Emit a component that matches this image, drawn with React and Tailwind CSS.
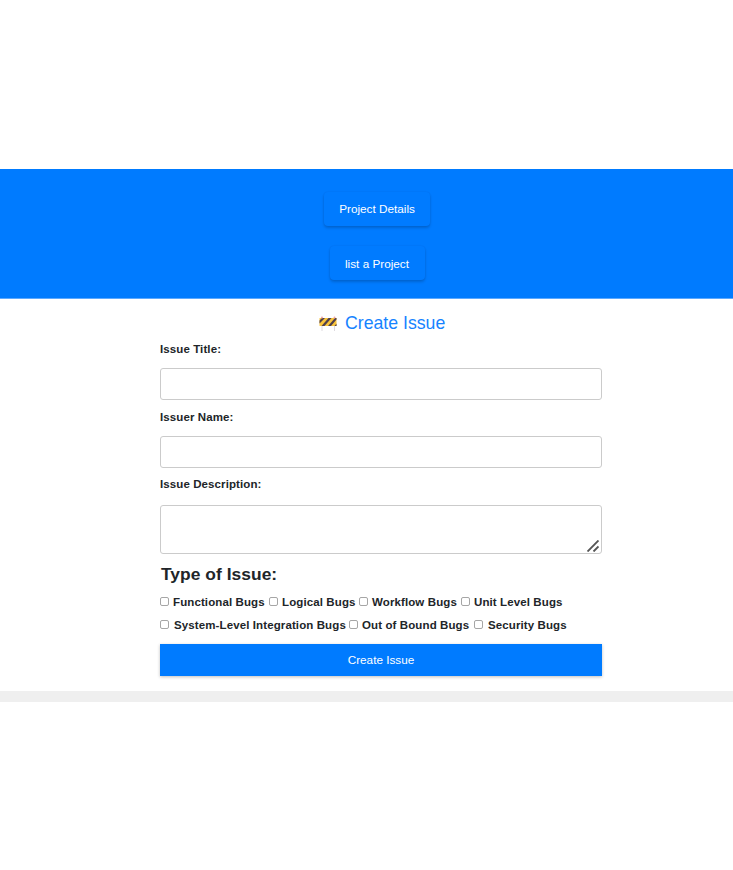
function NavButton({ className, children }) {
  return (
    <button
      className={`${className} rounded-[4px] bg-[#007bff] text-[11.75px] leading-[14px] text-white shadow-[0_2px_3px_rgba(0,0,0,0.18),0_0_2px_rgba(0,0,0,0.08)]`}
    >
      {children}
    </button>
  );
}

function Barrier() {
  return (
    <svg className="mt-[5px] h-[16px] w-[18px] shrink-0" viewBox="0 0 18 16">
      <path d="M3 2V15M15.500 2V15" stroke="#dedbe0" strokeWidth="1" />
      <rect x="0.500" y="2" width="17" height="8" rx="0.500" fill="#f9c43a" />
      <path
        d="M0.500 4.500L3 2H6L0.500 7.500ZM2.500 10L9.500 2H12.500L5.500 10ZM9 10L16 2H17.500V3.500L12 10ZM15.500 10L17.500 7.500V10Z"
        fill="#50404d"
      />
      <circle cx="3" cy="1.500" r="1" fill="#f3a5a5" />
      <circle cx="15.500" cy="1.500" r="1" fill="#f3a5a5" />
    </svg>
  );
}

function Label({ className, children }) {
  return (
    <label className={`${className} block text-[11.5px] leading-[14px] font-bold tracking-[0.1px]`}>
      {children}
    </label>
  );
}

function Option({ width, gap, children }) {
  return (
    <label className={`${width} ${gap} flex h-[14px] shrink-0 items-start whitespace-nowrap`}>
      <input
        type="checkbox"
        className="mt-[2px] h-[9px] w-[9px] shrink-0 appearance-none rounded-[2px] border border-[#a6a6a6] bg-white"
      />
      <span>{children}</span>
    </label>
  );
}

export default function App() {
  return (
    <div className="flex h-[870px] w-[733px] flex-col overflow-hidden bg-white pt-[169px] font-['Liberation_Sans',Arial,sans-serif] text-[#212529]">
      <nav className="flex h-[130px] shrink-0 flex-col items-center border-b border-[#5ca9ff] bg-[#007bff] pt-[23px] pl-[21px]">
        <NavButton className="h-[34px] w-[106px]">Project Details</NavButton>
        <NavButton className="mt-[20px] h-[34px] w-[95px] pt-[2px]">list a Project</NavButton>
      </nav>
      <main className="ml-[160px] w-[442px] shrink-0">
        <h1 className="mt-[12px] ml-[159px] flex h-[24px] text-[17.7px] leading-[24px] text-[#1683ff]">
          <Barrier />
          <span className="ml-[8px] whitespace-nowrap">Create Issue</span>
        </h1>
        <Label className="mt-[7px]">Issue Title:</Label>
        <input className="mt-[12px] block h-[32px] w-full rounded-[3px] border border-[#cbcbcb]" />
        <Label className="mt-[10px]">Issuer Name:</Label>
        <input className="mt-[12px] block h-[32px] w-full rounded-[3px] border border-[#cbcbcb]" />
        <Label className="mt-[9px]">Issue Description:</Label>
        <div className="mt-[14px] flex h-[49px] items-end justify-end rounded-[3px] border border-[#cbcbcb]">
          <svg className="mr-[2px] mb-[1px] h-[12px] w-[12px]" viewBox="0 0 12 12" fill="none" stroke="#555" strokeWidth="1.900">
            <path d="M0.500 11.500L11.500 0.500M6.500 11.500L11.500 6.500" />
          </svg>
        </div>
        <h2 className="mt-[9px] pl-[1px] text-[17.4px] leading-[22px] font-bold tracking-[0.04px]">Type of Issue:</h2>
        <div className="mt-[10px] text-[11.5px] leading-[14px] font-bold tracking-[0.11px]">
          <div className="flex">
            <Option width="w-[109px]" gap="gap-[4px]">Functional Bugs</Option>
            <Option width="w-[90px]" gap="gap-[4px]">Logical Bugs</Option>
            <Option width="w-[102px]" gap="gap-[4px]">Workflow Bugs</Option>
            <Option width="w-[105px]" gap="gap-[4px]">Unit Level Bugs</Option>
          </div>
          <div className="mt-[9px] flex">
            <Option width="w-[189px]" gap="gap-[5px]">System-Level Integration Bugs</Option>
            <Option width="w-[125px]" gap="gap-[4px]">Out of Bound Bugs</Option>
            <Option width="w-[100px]" gap="gap-[5px]">Security Bugs</Option>
          </div>
        </div>
        <button className="mt-[12px] block h-[32px] w-full bg-[#007bff] text-[11.75px] text-white shadow-[0_1px_3px_rgba(0,0,0,0.25)]">
          Create Issue
        </button>
      </main>
      <footer className="mt-[15px] h-[11px] shrink-0 bg-[#efefef]" />
    </div>
  );
}
